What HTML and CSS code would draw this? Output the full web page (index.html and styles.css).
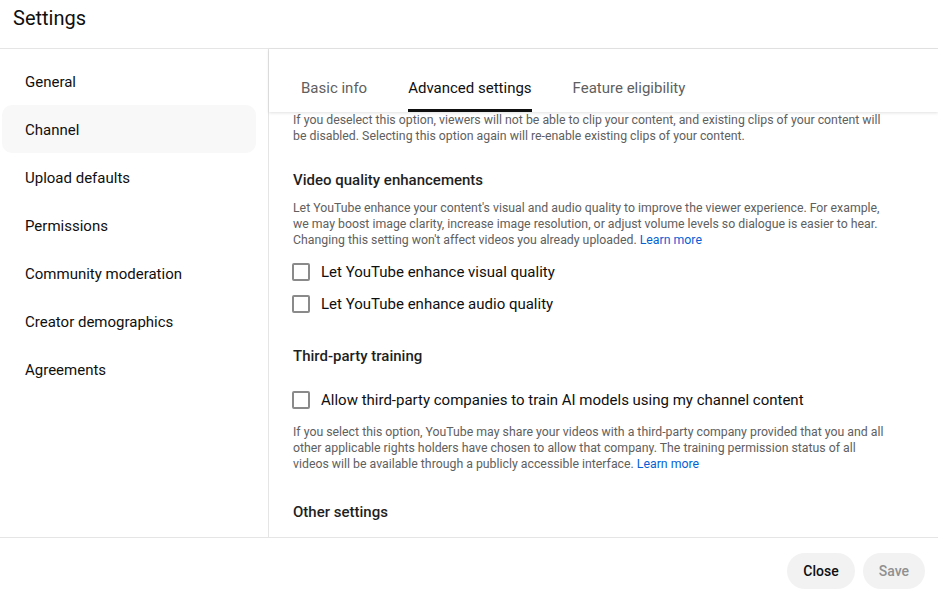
FILE: index.html
```html
<!DOCTYPE html>
<html lang="en">
<head>
    <meta charset="UTF-8">
    <meta name="viewport" content="width=device-width, initial-scale=1.0">
    <title>Settings</title>
    <link rel="stylesheet" href="styles.css">
</head>
<body>
    <div class="dialog">
        <header class="dialog-header">Settings</header>
        <main class="dialog-main">
            <nav class="side-nav">
                <div class="side-nav--item">General</div>
                <div class="side-nav--item active">Channel</div>
                <div class="side-nav--item">Upload defaults</div>
                <div class="side-nav--item">Permissions</div>
                <div class="side-nav--item">Community moderation</div>
                <div class="side-nav--item">Creator demographics</div>
                <div class="side-nav--item">Agreements</div>
            </nav>
            <section class="panel">
                <div class="tabs">
                    <div class="tab">Basic info</div>
                    <div class="tab active">Advanced settings</div>
                    <div class="tab">Feature eligibility</div>
                </div>
                <div class="panel-scroll">
                    <p class="desc">If you deselect this option, viewers will not be able to clip your content, and existing clips of your content will be disabled. Selecting this option again will re-enable existing clips of your content.</p>

                    <div class="block">
                        <h3 class="block-title">Video quality enhancements</h3>
                        <p class="desc">Let YouTube enhance your content's visual and audio quality to improve the viewer experience. For example, we may boost image clarity, increase image resolution, or adjust volume levels so dialogue is easier to hear. Changing this setting won't affect videos you already uploaded. <a>Learn more</a></p>
                        <div class="checks">
                            <label class="check"><span class="check-box"></span>Let YouTube enhance visual quality</label>
                            <label class="check"><span class="check-box"></span>Let YouTube enhance audio quality</label>
                        </div>
                    </div>

                    <div class="block">
                        <h3 class="block-title">Third-party training</h3>
                        <div class="checks checks--spaced">
                            <label class="check"><span class="check-box"></span>Allow third-party companies to train AI models using my channel content</label>
                        </div>
                        <p class="desc">If you select this option, YouTube may share your videos with a third-party company provided that you and all other applicable rights holders have chosen to allow that company. The training permission status of all videos will be available through a publicly accessible interface. <a>Learn more</a></p>
                    </div>

                    <div class="block block--last">
                        <h3 class="block-title">Other settings</h3>
                    </div>
                </div>
            </section>
        </main>
        <footer class="dialog-footer">
            <button class="btn">Close</button>
            <button class="btn btn--disabled">Save</button>
        </footer>
    </div>
</body>
</html>
```

FILE: styles.css
```css
*,*::before,*::after{
    padding: 0;
    margin: 0;
    box-sizing: border-box;
}
body{
    font-family: Roboto, "Liberation Sans", Arial, sans-serif;
    color: #0f0f0f;
    background: #fff;
}
a{
    cursor: pointer;
    color: #065fd4;
}
.dialog{
    height: 594px;
    display: flex;
    flex-direction: column;
    overflow: hidden;
}
.dialog-header{
    height: 49px;
    padding: 6px 13px 0;
    font-size: 20px;
    line-height: 24px;
    border-bottom: 1px solid #e5e5e5;
}
.dialog-main{
    flex: 1;
    display: flex;
    min-height: 0;
}

.side-nav{
    width: 269px;
    flex-shrink: 0;
    padding-top: 8px;
    border-right: 1px solid #e5e5e5;
}
.side-nav--item{
    width: 254px;
    height: 48px;
    margin-left: 2px;
    padding: 2px 0 0 23px;
    border-radius: 10px;
    font-size: 15px;
    line-height: 46px;
    color: #0f0f0f;
}
.side-nav--item.active{
    background-color: #f8f8f8;
}

.panel{
    flex: 1;
    display: flex;
    flex-direction: column;
    min-width: 0;
}
.tabs{
    height: 63px;
    display: flex;
    padding-left: 32px;
    box-shadow: 0 1px 3px rgba(0,0,0,0.12);
    position: relative;
    z-index: 1;
}
.tab{
    height: 63px;
    margin-right: 41px;
    padding-top: 27px;
    font-size: 15px;
    line-height: 24px;
    color: #606060;
    border-bottom: 3px solid transparent;
}
.tab.active{
    color: #0f0f0f;
    border-bottom-color: #0f0f0f;
}

.panel-scroll{
    flex: 1;
    overflow: hidden;
    padding: 0 24px;
}
.desc{
    max-width: 600px;
    font-size: 12.3px;
    line-height: 16px;
    color: #606060;
}
.desc a{
    text-decoration: none;
}
.block{
    padding-top: 24px;
}
.block--last{
    padding-top: 28px;
}
.block-title{
    font-size: 15px;
    font-weight: 500;
    line-height: 24px;
    margin-bottom: 8px;
    color: #1f1f1f;
}
.checks{
    padding: 8px 0 0;
}
.checks--spaced{
    padding: 8px 0 8px;
}
.check{
    display: flex;
    align-items: center;
    height: 32px;
    font-size: 15px;
    color: #0f0f0f;
}
.check-box{
    width: 18px;
    height: 18px;
    margin-left: -1px;
    margin-right: 11px;
    border: 2px solid #8a8a8a;
    border-radius: 2px;
}

.dialog-footer{
    height: 57px;
    flex-shrink: 0;
    border-top: 1px solid #e5e5e5;
    display: flex;
    justify-content: flex-end;
    align-items: center;
    gap: 8px;
    padding: 9px 13px 0;
}
.btn{
    height: 36px;
    padding: 0 16px;
    border: none;
    border-radius: 18px;
    background-color: #f2f2f2;
    font-family: inherit;
    font-size: 14px;
    font-weight: 500;
    color: #0f0f0f;
    cursor: pointer;
}
.btn--disabled{
    color: #909090;
    cursor: default;
}
```
